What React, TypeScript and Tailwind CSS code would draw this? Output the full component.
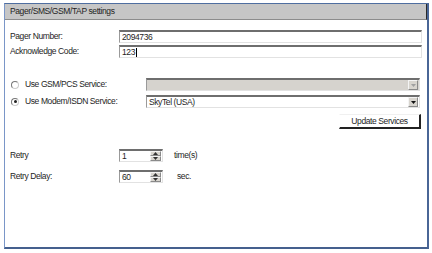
import React from "react";

const font = { fontFamily: '"Liberation Sans", Arial, sans-serif' };

function Sunken({ className = "", children }: { className?: string; children?: React.ReactNode }) {
  return (
    <div
      className={
        "flex items-center border-t-2 border-l border-r border-b border-t-[#6e6e6e] border-l-[#9a9a9a] border-r-[#e2e2e2] border-b-[#e2e2e2] " +
        className
      }
    >
      {children}
    </div>
  );
}

function Arrow({ disabled }: { disabled?: boolean }) {
  return (
    <div className="w-[10px] h-[10px] mr-[1px] flex items-center justify-center bg-[#d8d5cf] border border-t-[#f4f4f4] border-l-[#f4f4f4] border-r-[#8a8a8a] border-b-[#8a8a8a]">
      <svg width="5" height="3" viewBox="0 0 5 3">
        <path d="M0 0 H5 L2.5 3 Z" fill={disabled ? "#a0a0a0" : "#111"} />
      </svg>
    </div>
  );
}

function Spin() {
  return (
    <div className="flex flex-col w-[11px] h-[10px] mr-[1px]">
      {[0, 1].map((i) => (
        <div
          key={i}
          className="flex-1 flex items-center justify-center bg-[#d8d5cf] border border-t-[#f4f4f4] border-l-[#f4f4f4] border-r-[#8a8a8a] border-b-[#8a8a8a]"
        >
          <svg width="5" height="3" viewBox="0 0 5 3">
            <path d={i === 0 ? "M0 3 H5 L2.5 0 Z" : "M0 0 H5 L2.5 3 Z"} fill="#333" />
          </svg>
        </div>
      ))}
    </div>
  );
}

function Radio({ checked }: { checked?: boolean }) {
  return (
    <div className="w-[8px] h-[8px] rounded-full bg-white border border-t-[#777] border-l-[#777] border-r-[#ccc] border-b-[#ccc] flex items-center justify-center">
      {checked && <div className="w-[3px] h-[3px] rounded-full bg-[#222]" />}
    </div>
  );
}

export default function App() {
  const txt = "text-[8.5px] tracking-[-0.4px] text-[#1e1e1e] leading-none";
  return (
    <div className="w-[432px] h-[253px] bg-white pt-[3px] pl-[4px] pr-[3px] pb-[4px]" style={font}>
      <div className="w-full h-full flex flex-col border-l border-t border-r-2 border-b-2 border-l-[#7a96c8] border-t-[#4f6ea0] border-r-[#4a6696] border-b-[#45608e]">
        <div className="h-[16px] shrink-0 bg-[#c6c6c6] border-b border-b-[#8c8c8c] border-r border-r-[#2a2a2a] flex items-center pl-[5px]">
          <span className={txt}>Pager/SMS/GSM/TAP settings</span>
        </div>
        <div className="flex flex-col pl-[5px] pr-[5px]">
          <div className="flex items-center mt-[10px] h-[13px]">
            <span className={txt + " w-[109px]"}>Pager Number:</span>
            <Sunken className="flex-1 h-[13px] bg-white pl-[2px]">
              <span className={txt}>2094736</span>
            </Sunken>
          </div>
          <div className="flex items-center mt-[2px] h-[13px]">
            <span className={txt + " w-[109px]"}>Acknowledge Code:</span>
            <Sunken className="flex-1 h-[13px] bg-white pl-[2px]">
              <span className={txt}>123</span>
              <span className="w-px h-[9px] bg-black ml-[1px]" />
            </Sunken>
          </div>

          <div className="flex items-center mt-[20px] h-[13px] pr-[2px]">
            <div className="w-[136px] flex items-center pl-[1px]">
              <Radio />
              <span className={txt + " ml-[6px]"}>Use GSM/PCS Service:</span>
            </div>
            <Sunken className="flex-1 h-[13px] bg-[#d6d3ce] justify-end">
              <Arrow disabled />
            </Sunken>
          </div>
          <div className="flex items-center mt-[4px] h-[13px] pr-[2px]">
            <div className="w-[136px] flex items-center pl-[1px]">
              <Radio checked />
              <span className={txt + " ml-[6px]"}>Use Modem/ISDN Service:</span>
            </div>
            <Sunken className="flex-1 h-[13px] bg-white justify-between pl-[2px]">
              <span className={txt}>SkyTel (USA)</span>
              <Arrow />
            </Sunken>
          </div>
          <div className="flex justify-end mt-[6px] pr-[1px]">
            <button className="w-[82px] h-[15px] bg-white border-r-2 border-b-2 border-r-[#222] border-b-[#222] border-t border-l border-t-[#f0f0f0] border-l-white flex items-center justify-center">
              <span className={txt}>Update Services</span>
            </button>
          </div>

          <div className="flex items-center mt-[20px] h-[13px]">
            <span className={txt + " w-[109px]"}>Retry</span>
            <Sunken className="w-[44px] h-[13px] bg-white justify-between pl-[2px]">
              <span className={txt}>1</span>
              <Spin />
            </Sunken>
            <span className={txt + " ml-[11px]"}>time(s)</span>
          </div>
          <div className="flex items-center mt-[8px] h-[13px]">
            <span className={txt + " w-[109px]"}>Retry Delay:</span>
            <Sunken className="w-[44px] h-[13px] bg-white justify-between pl-[2px]">
              <span className={txt}>60</span>
              <Spin />
            </Sunken>
            <span className={txt + " ml-[14px]"}>sec.</span>
          </div>
        </div>
      </div>
    </div>
  );
}
